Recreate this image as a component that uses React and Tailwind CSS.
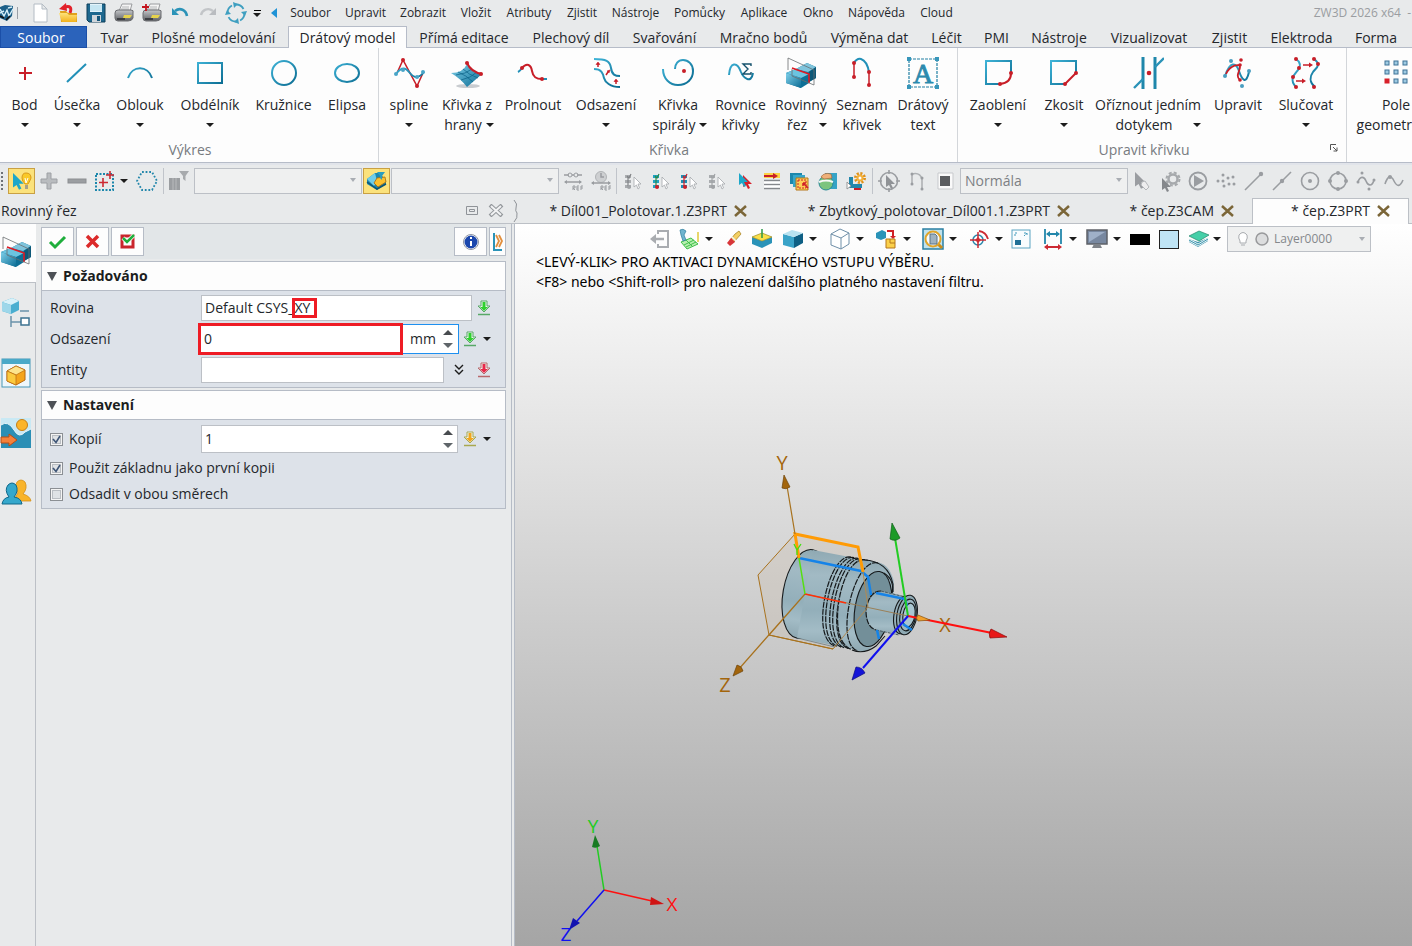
import React, { useState } from "react";

// Shared svg wrapper, s is the side of the square box
function Ico({ s = 24, children }) {
  return (
    <svg
      width={s}
      height={s}
      viewBox={`0 0 ${s} ${s}`}
      fill="none"
      aria-hidden="true"
      className="shrink-0"
    >
      {children}
    </svg>
  );
}

function Caret() {
  return (
    <svg width="8" height="4" viewBox="0 0 8 4" aria-hidden="true" className="shrink-0">
      <path d="M0 0h8L4 4z" fill="#1c1c1c" />
    </svg>
  );
}

function Gradients() {
  return (
    <svg width="0" height="0" className="absolute" aria-hidden="true">
      <defs>
        <linearGradient id="cy" x1="0" y1="0" x2="32" y2="32" gradientUnits="userSpaceOnUse">
          <stop offset="0.1" stopColor="#3fb4d8" />
          <stop offset="0.9" stopColor="#0a6a90" />
        </linearGradient>
        <linearGradient id="cube" x1="0" y1="0" x2="1" y2="1">
          <stop offset="0" stopColor="#7fd0ea" />
          <stop offset="1" stopColor="#0b6c94" />
        </linearGradient>
        <linearGradient id="folder" x1="0" y1="0" x2="0" y2="1">
          <stop offset="0" stopColor="#fde27a" />
          <stop offset="1" stopColor="#f3b21c" />
        </linearGradient>
        <linearGradient id="gray" x1="0" y1="0" x2="0" y2="1">
          <stop offset="0" stopColor="#c4c6c9" />
          <stop offset="1" stopColor="#5d5f63" />
        </linearGradient>
        <linearGradient id="body" x1="0" y1="0" x2="0" y2="1">
          <stop offset="0" stopColor="#8fa9b3" />
          <stop offset="0.25" stopColor="#a2bac4" />
          <stop offset="0.6" stopColor="#93afba" />
          <stop offset="0.8" stopColor="#a3bcc6" />
          <stop offset="1" stopColor="#8da7b1" />
        </linearGradient>
      </defs>
    </svg>
  );
}

const RED = "#c81e28";
const CY = "url(#cy)";

function Dots({ points, r = 2, fill = RED }) {
  return points.map(([x, y]) => <circle key={`${x}-${y}`} cx={x} cy={y} r={r} fill={fill} />);
}

function SectionBox() {
  return (
    <>
      <path d="M11 12L22 6L31 10V21L24 25L11 20Z" fill="#14799f" />
      <path d="M11 12L22 6L31 10L23 15Z" fill="#7fc4dc" />
      <path d="M24 15L31 10V21L24 25Z" fill="#0d5878" />
      <path d="M1 16L11 12L24 17V26L16 31L1 26Z" fill="#0e6f96" />
      <path d="M1 16L11 12L24 17L16 21Z" fill="#6cc4e0" />
      <path d="M1 16L16 21V31L1 26Z" fill="url(#cube)" />
      <path d="M7 11L24 17V26" stroke="#e01822" strokeWidth="1.6" />
      <path d="M3 13V1L29 13V28L7 19V12" stroke="#6a6d70" strokeWidth="0.8" />
    </>
  );
}

// Ribbon icons, 32px
const big = {
  point: <path d="M16 10v13M10 16h13" stroke={RED} strokeWidth="2" />,
  line: <path d="M6 25L25 7" stroke="#2190b8" strokeWidth="2" />,
  arc: <path d="M4 21C8 8 24 8 28 21" stroke={CY} strokeWidth="2" />,
  rect: <rect x="4" y="6" width="24" height="20" stroke={CY} strokeWidth="2" />,
  circle: <circle cx="16" cy="16" r="12" stroke={CY} strokeWidth="2" />,
  ellipse: <ellipse cx="16" cy="16" rx="12" ry="9" stroke={CY} strokeWidth="2" />,
  spline: (
    <>
      <path d="M4 16L10 3L24 29L30 16" stroke={RED} strokeWidth="1.5" />
      <path d="M3 17C9 9 13 11 16 15S24 24 31 15" stroke={CY} strokeWidth="2" />
      <Dots points={[[10, 3], [24, 29]]} />
      <Dots points={[[3, 17], [10, 13], [24, 20], [30, 15]]} fill="#4aa5c8" />
    </>
  ),
  edge: (
    <>
      <ellipse cx="17" cy="29" rx="12" ry="2" fill="#c9ccd0" />
      <path d="M0 16Q12 16 16 7Q20 15 31 17L16 30Q10 22 0 16Z" fill="url(#cube)" />
      <path d="M5 18Q15 17 21 12M10 23Q20 21 26 15M7 15Q15 18 22 25M12 12Q18 18 27 21" stroke="#0a6286" strokeWidth="0.7" />
      <path d="M16 6Q20 15 31 17" stroke={RED} strokeWidth="2" />
      <Dots points={[[16, 6], [30, 17]]} />
    </>
  ),
  blend: (
    <>
      <path d="M1 15Q3 14 5 11M25 22H30" stroke="#2190b8" strokeWidth="2" />
      <path d="M5 11C10 5 14 8 15 14S19 22 25 22" stroke={RED} strokeWidth="2" />
      <Dots points={[[5, 11], [25, 22]]} />
    </>
  ),
  offset: (
    <>
      <path d="M4 2C16 2 20 4 21 11S25 19 30 19" stroke={CY} strokeWidth="2" />
      <path d="M4 12C12 12 13 17 14 21S20 30 30 30" stroke={CY} strokeWidth="2" />
      <path d="M8 10V6M16 18L18 15M26 27V23" stroke={RED} strokeWidth="1.5" />
      <path d="M6 7.5L8 5L10 7.5ZM17 14L20 13L19 16ZM24 24.5L26 22L28 24.5Z" fill={RED} stroke={RED} strokeWidth="0.6" />
    </>
  ),
  spiral: (
    <>
      <path d="M1 12C1 22 8 28 16 28C25 28 31 22 31 14C31 7 26 3 21 3C16 3 13 7 13 12" stroke={CY} strokeWidth="2" />
      <Dots points={[[22, 14]]} />
    </>
  ),
  equation: (
    <>
      <path d="M4 18C5 5 12 4 16 15C18 20 26 28 28 16" stroke={CY} strokeWidth="2" />
      <path d="M26 9V7H18L23 12L18 17H26V15" stroke="#15516c" strokeWidth="1.4" />
    </>
  ),
  section: <SectionBox />,
  list: (
    <>
      <path d="M8 6Q11 1 15 2Q21 4 23 15" stroke="#2190b8" strokeWidth="2" />
      <path d="M8 6V20M23 15V28" stroke={RED} strokeWidth="1.5" />
      <Dots points={[[8, 6], [8, 20], [23, 15], [23, 28]]} />
    </>
  ),
  text: (
    <>
      <rect x="2" y="2" width="28" height="28" stroke="#2280a4" strokeWidth="1.2" strokeDasharray="3 1" />
      <path d="M0 0h4v4H0zM28 0h4v4h-4zM0 28h4v4H0zM28 28h4v4h-4z" fill="#3796ba" />
      <text x="16" y="26" textAnchor="middle" fontFamily="Liberation Serif, serif" fontSize="28" fill="#2b8aae" stroke="#2b8aae" strokeWidth="0.8">A</text>
    </>
  ),
  fillet: (
    <>
      <path d="M29 16V4H4V27H18" stroke={CY} strokeWidth="2" />
      <path d="M29 16Q29 26 18 27" stroke={RED} strokeWidth="2" />
      <Dots points={[[29, 16], [18, 27]]} />
    </>
  ),
  chamfer: (
    <>
      <path d="M28 16V4H3V27H17" stroke={CY} strokeWidth="2" />
      <path d="M28 16L17 27" stroke={RED} strokeWidth="2" />
      <Dots points={[[28, 16], [17, 27]]} />
    </>
  ),
  trim: (
    <>
      <path d="M11 0V32M23 0V32" stroke="#1f87ab" strokeWidth="3" />
      <path d="M32 1L23 10M2 31L11 22" stroke="#2b93b8" strokeWidth="2.4" />
      <Dots points={[[17, 16]]} r={2.3} />
    </>
  ),
  modify: (
    <>
      <path d="M3 19C8 4 14 5 17 14S24 28 27 15" stroke={CY} strokeWidth="2" />
      <path d="M4 17C8 8 18 6 18 10S13 19 18 23" stroke={RED} strokeWidth="1.800" />
      <Dots points={[[19, 3], [18, 8], [18, 23]]} r={1.8} />
      <Dots points={[[9, 4], [3, 19], [27, 14], [20, 29]]} fill="#4a9dc0" />
    </>
  ),
  connect: (
    <>
      <path d="M6 2C12 6 10 10 8 13S-2 22 6 30" stroke={CY} strokeWidth="2" />
      <path d="M24 2C32 8 26 11 23 15S19 25 25 30" stroke={CY} strokeWidth="2" />
      <path d="M13 8H20M6 24H14" stroke={RED} strokeWidth="1.6" />
      <path d="M19 5.5L23 8L19 10.5ZM12 21.5L16 24L12 26.5Z" fill={RED} />
      <Dots points={[[6, 2], [9, 11], [3, 20], [6, 30], [24, 2], [28, 7], [24, 30]]} />
    </>
  ),
  pattern: (
    <>
      {[5, 14, 23].map((y) =>
        [5, 14, 23].map((x) => (
          <rect
            key={`${x}-${y}`}
            x={x}
            y={y - 1}
            width="4"
            height="4"
            fill={x === 5 && y === 23 ? "#d8202a" : "#9fcbe2"}
            stroke={x === 5 && y === 23 ? "#d8202a" : "#3f7397"}
          />
        ))
      )}
    </>
  ),
};

const ribbonGroups = [
  {
    title: "Výkres",
    cls: "pr-[6px]",
    items: [
      { icon: "point", lines: ["Bod"], drop: true, w: "w-[49px]" },
      { icon: "line", lines: ["Úsečka"], drop: true, w: "w-[56px]" },
      { icon: "arc", lines: ["Oblouk"], drop: true, w: "w-[70px]" },
      { icon: "rect", lines: ["Obdélník"], drop: true, w: "w-[70px]" },
      { icon: "circle", lines: ["Kružnice"], w: "w-[77px]" },
      { icon: "ellipse", lines: ["Elipsa"], w: "w-[50px]" },
    ],
  },
  {
    title: "Křivka",
    cls: "pl-[4px] pr-[3px]",
    items: [
      { icon: "spline", lines: ["spline"], drop: true, w: "w-[52px]" },
      { icon: "edge", lines: ["Křivka z", "hrany"], drop: true, w: "w-[64px]", line: "gap-1 pl-1" },
      { icon: "blend", lines: ["Prolnout"], w: "w-[68px]" },
      { icon: "offset", lines: ["Odsazení"], drop: true, w: "w-[78px]" },
      { icon: "spiral", lines: ["Křivka", "spirály"], drop: true, w: "w-[66px]", line: "gap-1 pl-1" },
      { icon: "equation", lines: ["Rovnice", "křivky"], w: "w-[59px]" },
      { icon: "section", lines: ["Rovinný", "řez"], drop: true, w: "w-[62px]", line: "gap-3 pl-3" },
      { icon: "list", lines: ["Seznam", "křivek"], w: "w-[60px]" },
      { icon: "text", lines: ["Drátový", "text"], w: "w-[62px]" },
    ],
  },
  {
    title: "Upravit křivku",
    cls: "pl-[4px] pr-[8px]",
    launcher: true,
    items: [
      { icon: "fillet", lines: ["Zaoblení"], drop: true, w: "w-[72px]" },
      { icon: "chamfer", lines: ["Zkosit"], drop: true, w: "w-[60px]" },
      { icon: "trim", lines: ["Oříznout jedním", "dotykem"], drop: true, w: "w-[108px]", line: "gap-5 pl-5" },
      { icon: "modify", lines: ["Upravit"], w: "w-[72px]" },
      { icon: "connect", lines: ["Slučovat"], drop: true, w: "w-[64px]" },
    ],
  },
  {
    title: "",
    cls: "pl-[3px]",
    items: [{ icon: "pattern", lines: ["Pole", "geometrie"], drop: true, w: "w-[92px]", line: "gap-1" }],
  },
];

function RibbonButton({ item }) {
  const { icon, lines, drop, w, line } = item;
  return (
    <button className={`flex shrink-0 flex-col items-center pt-[9px] leading-5 whitespace-nowrap hover:bg-[#eef4fa] ${w}`}>
      <Ico s={32}>{big[icon]}</Ico>
      <span className="mt-[6px]">{lines[0]}</span>
      {lines[1] ? (
        <span className={`flex items-center ${line || ""}`}>
          {lines[1]}
          {drop && <Caret />}
        </span>
      ) : (
        drop && (
          <span className="flex h-5 items-center">
            <Caret />
          </span>
        )
      )}
    </button>
  );
}

function Ribbon() {
  return (
    <div className="flex h-[115px] shrink-0 overflow-hidden border-b border-[#b6bcc8] bg-[#fdfdfd]">
      {ribbonGroups.map((g) => (
        <section key={g.title} className="flex shrink-0 flex-col border-r border-[#d3d6da]">
          <div className={`flex h-[92px] ${g.cls}`}>
            {g.items.map((item) => (
              <RibbonButton key={item.lines[0]} item={item} />
            ))}
          </div>
          <div className={`relative text-center leading-5 text-[#777b80] ${g.launcher ? "pr-4" : "pl-[2px]"}`}>
            {g.title}
            {g.launcher && (
              <button aria-label="Nastavení skupiny" className="absolute top-0 right-[4px] flex h-4 w-4 items-center justify-center">
                <svg width="8" height="8" viewBox="0 0 8 8" fill="none" stroke="#555">
                  <path d="M0.5 6V0.5H6M3 3L7 7M7 3.5V7H3.5" />
                </svg>
              </button>
            )}
          </div>
        </section>
      ))}
    </div>
  );
}

// Quick access icons
function Printer() {
  return (
    <>
      <path d="M7 10L10 3H20L18 10Z" fill="#f4f4f4" stroke="#9a9c9f" />
      <path d="M10 6H17M9 8H17" stroke="#b4b6b8" />
      <path d="M3 12Q3 9 6 9H19Q22 9 21 12V17Q20 20 16 20H6Q3 20 3 17Z" fill="url(#gray)" stroke="#6a6c70" />
      <path d="M5 18H13" stroke="#3c3e42" strokeWidth="2" />
      <path d="M12 14H20L18 17H11Z" fill="#e6d34c" />
    </>
  );
}

const quick = [
  {
    name: "Nový",
    art: <path d="M6 3H14L19 8V21H6ZM14 3V8H19" fill="#fff" stroke="#b4bcc4" />,
  },
  {
    name: "Otevřít",
    art: (
      <>
        <path d="M4 10H10L12 12H21V21H5Z" fill="#e0a21c" />
        <path d="M3 12H11L13 14H21L20 21H6Z" fill="url(#folder)" />
        <path d="M14 12Q17 4 9 6" stroke="#e2202a" strokeWidth="3" />
        <path d="M10 2L3 8L11 10Z" fill="#e2202a" />
      </>
    ),
  },
  {
    name: "Uložit",
    art: (
      <>
        <path d="M3 3H21V21H5L3 19Z" fill="#1d688f" stroke="#0c3c58" />
        <path d="M6 3H18V11H6Z" fill="#e4f4fb" />
        <path d="M6 5H18M6 7H18M6 9H18" stroke="#a8d8ea" />
        <path d="M8 14H17V21H8Z" fill="#cfd5da" />
        <path d="M13 15H16V20H13Z" fill="#16567a" />
      </>
    ),
  },
  { name: "Tisk", art: <Printer /> },
  {
    name: "Tisk+",
    art: (
      <>
        <Printer />
        <path d="M6 3V10M2 6H9" stroke="#c4141e" strokeWidth="1.8" />
      </>
    ),
  },
  {
    name: "Zpět",
    art: (
      <>
        <path d="M7 10C12 6 18 9 19 15" stroke="#2b93b8" strokeWidth="2.6" />
        <path d="M4 7V14H11Z" fill="#2b93b8" />
      </>
    ),
  },
  {
    name: "Znovu",
    art: (
      <>
        <path d="M17 10C12 6 6 9 5 14" stroke="#c2c5c8" strokeWidth="2.4" />
        <path d="M20 7V14H13Z" fill="#b9bcc0" />
      </>
    ),
  },
  {
    name: "Obnovit",
    art: (
      <>
        <circle cx="12" cy="12" r="8.5" stroke="#3f9fc0" strokeWidth="1.8" strokeDasharray="9 4.3" />
        <path d="M9 1L14 3L10 7ZM23 10L21 15L17 11ZM15 23L10 21L14 17ZM1 14L3 9L7 13Z" fill="#3f9fc0" />
      </>
    ),
  },
];

const menu = [
  ["Soubor", "w-[55px]"],
  ["Upravit", "w-[55px]"],
  ["Zobrazit", "w-[60px]"],
  ["Vložit", "w-[46px]"],
  ["Atributy", "w-[60px]"],
  ["Zjistit", "w-[46px]"],
  ["Nástroje", "w-[61px]"],
  ["Pomůcky", "w-[67px]"],
  ["Aplikace", "w-[62px]"],
  ["Okno", "w-[46px]"],
  ["Nápověda", "w-[71px]"],
  ["Cloud", "w-[49px]"],
];

function TitleBar() {
  return (
    <div className="flex h-[26px] shrink-0 items-center overflow-hidden text-xs">
      <div className="flex w-[26px] items-center gap-[3px]">
        <svg width="14" height="18" viewBox="0 0 14 18" fill="none" aria-hidden="true">
          <path d="M0 3L5 1L13 2L12 12L7 17L0 14Z" fill="#1c5f88" />
          <path d="M0 5L4 12L7 6L9 12L13 5M0 9L4 7M8 4L12 3" stroke="#d5eef8" strokeWidth="1.4" />
          <path d="M0 12L4 14M6 16L10 12" stroke="#111" strokeWidth="1.6" />
        </svg>
        <span className="h-3 w-px bg-[#9a9fa6]" />
      </div>
      {quick.map((q) => (
        <button key={q.name} aria-label={q.name} className="flex w-7 shrink-0 justify-center">
          <Ico>{q.art}</Ico>
        </button>
      ))}
      <button aria-label="Přizpůsobit" className="flex w-[14px] shrink-0 flex-col items-center gap-[2px]">
        <span className="h-px w-[7px] bg-black" />
        <Caret />
      </button>
      <button aria-label="Sbalit nabídku" className="flex w-[19px] shrink-0 justify-center">
        <svg width="6" height="10" viewBox="0 0 6 10">
          <path d="M6 0V10L0 5Z" fill="#1f93d6" />
        </svg>
      </button>
      <nav className="flex shrink-0">
        {menu.map(([label, w]) => (
          <button key={label} className={`whitespace-nowrap ${w}`}>
            {label}
          </button>
        ))}
      </nav>
      <span className="ml-auto pr-px whitespace-pre text-[#9a9da1]">ZW3D 2026 x64  -</span>
    </div>
  );
}

const tabs = [
  ["Tvar", "w-[49px]"],
  ["Plošné modelování", "w-[149px]"],
  ["Drátový model", "w-[119px]"],
  ["Přímá editace", "w-[114px]"],
  ["Plechový díl", "w-[100px]"],
  ["Svařování", "w-[87px]"],
  ["Mračno bodů", "w-[111px]"],
  ["Výměna dat", "w-[101px]"],
  ["Léčit", "w-[53px]"],
  ["PMI", "w-[47px]"],
  ["Nástroje", "w-[78px]"],
  ["Vizualizovat", "w-[102px]"],
  ["Zjistit", "w-[59px]"],
  ["Elektroda", "w-[85px]"],
  ["Forma", "w-[64px]"],
];

function RibbonTabs() {
  const [active, setActive] = useState("Drátový model");
  return (
    <div role="tablist" className="flex h-[22px] shrink-0 overflow-hidden leading-[22px] whitespace-nowrap">
      <button className="w-[87px] shrink-0 border border-[#1b4fa8] bg-[#2b63bb] pr-[5px] leading-[19px] text-white">Soubor</button>
      <span className="w-[3px] shrink-0 border-b border-[#b6bcc8]" />
      {tabs.map(([label, w]) => (
        <button
          key={label}
          role="tab"
          aria-selected={active === label}
          onClick={() => setActive(label)}
          className={`flex shrink-0 justify-center ${w} ${
            active === label ? "border-x border-t border-[#b6bcc8] bg-[#fdfdfd]" : "border-b border-[#b6bcc8] pt-px"
          }`}
        >
          {label}
        </button>
      ))}
      <span className="flex-1 border-b border-[#b6bcc8]" />
    </div>
  );
}

// Selection toolbar
const G = "#9a9da1";

function Cursor({ fill = "#1ca7c9", x = 0, y = 0, k = 1 }) {
  return <path transform={`translate(${x} ${y}) scale(${k})`} d="M0 0L0 12L3 10L5 14L7 13L5 9L9 9Z" fill={fill} />;
}

function PickList({ bar, dot, tip }) {
  return (
    <>
      <path d="M5 6H11V9H5ZM5 11H11V14H5ZM5 16H11V19H5Z" fill={bar} />
      <path d="M8 8V17" stroke={tip} strokeWidth="1.2" />
      <path d="M7 7L9 9L11 5" stroke={tip} strokeWidth="1.2" />
      <circle cx="9" cy="18" r="2" fill={dot} />
      <path d="M14 8V18L16.5 16L18 20L19.5 19L18 15H21Z" fill="#fff" stroke="#a5a8ac" strokeWidth="0.8" />
    </>
  );
}

const selA = {
  plus: <path d="M10 4H14V10H20V14H14V20H10V14H4V10H10Z" fill="#b9bcbf" stroke="#9da0a4" />,
  minus: <rect x="3" y="10" width="18" height="4" fill="#9b9ea1" stroke="#8b8e92" />,
};

const selB = [
  {
    name: "Řetěz",
    art: (
      <>
        <path d="M3 6H8M11 6H13M16 6H21M4 13H20" stroke={G} strokeWidth="1.5" />
        <circle cx="9" cy="6" r="2" stroke={G} />
        <circle cx="15" cy="6" r="2" stroke={G} />
        <path d="M3 13L6 11V15ZM21 13L18 11V15Z" fill={G} />
        <path d="M12 17V21M12 17H14V19H12L14 21M18 17H16V21H18M16 19H18M20 21V17H22M20 19H22" stroke={G} />
      </>
    ),
  },
  {
    name: "Historie",
    art: (
      <>
        <circle cx="12" cy="8" r="5.5" fill="#cdcfd1" stroke="#b0b3b6" />
        <path d="M12 4V8H15M3 14H21" stroke={G} strokeWidth="1.5" />
        <path d="M2 14L5 12V16ZM22 14L19 12V16Z" fill={G} />
        <path d="M12 17V21M12 17H14V19H12L14 21M18 17H16V21H18M16 19H18M20 21V17H22M20 19H22" stroke={G} />
      </>
    ),
  },
];

const selC = [
  { name: "Seznam 1", art: <PickList bar="#a9acaf" dot="#a0a3a6" tip="#808386" /> },
  { name: "Seznam 2", art: <PickList bar="#1fa3c4" dot="#cf1f2a" tip="#2a8a4a" /> },
  { name: "Seznam 3", art: <PickList bar="#1f8fb4" dot="#cf1f2a" tip="#cf1f2a" /> },
  { name: "Seznam 4", art: <PickList bar="#a9acaf" dot="#a0a3a6" tip="#a0a3a6" /> },
  {
    name: "Výběr",
    art: (
      <>
        <Cursor x={11} y={6} fill="#d8202a" />
        <Cursor x={7} y={4} />
      </>
    ),
  },
  {
    name: "Pořadí",
    art: (
      <>
        <path d="M4 4H20V9H4Z" fill="#fbd345" />
        <path d="M4 7H14" stroke="#c81e28" strokeWidth="2" />
        <path d="M13 4L18 7L13 10Z" fill="#c81e28" />
        <path d="M4 11.5H20M4 15.5H20M4 19.5H20" stroke="#85888c" strokeWidth="1.4" />
        <path d="M4 13.500H20M4 17.500H20" stroke="#fff" strokeWidth="2" />
      </>
    ),
  },
  {
    name: "Oblast",
    art: (
      <>
        <path d="M2 4H14V15H2Z" fill="#1c87ac" />
        <path d="M5 6H17V18H5Z" fill="#35a7ca" />
        <path d="M8 9H20V21H8Z" fill="#fdcf57" stroke="#b5761d" />
        <path d="M10 11H18V19H10Z" stroke="#d02028" strokeDasharray="2 1" />
        <path d="M15 14L20 19M15 14V17M15 14H18" stroke="#d02028" strokeWidth="1.5" />
      </>
    ),
  },
  {
    name: "Koule",
    art: (
      <>
        <path d="M9 4H21V20H9Z" fill="#35a3c6" />
        <circle cx="10" cy="14" r="7" fill="#7cc47e" stroke="#2a8a96" />
        <path d="M3 13Q10 10 17 13" stroke="#f8f8f8" strokeWidth="2" />
        <path d="M5 8Q8 3 15 5L16 9L8 10Z" fill="#efb079" stroke="#a9683a" strokeWidth="0.7" />
      </>
    ),
  },
  {
    name: "Nastavení",
    art: (
      <>
        <path d="M7 8V17H18" stroke="#2387ab" strokeWidth="4" />
        <path d="M10 20H17" stroke="#c81e28" strokeWidth="2" />
        <circle cx="16" cy="9" r="4.500" stroke="#e0921a" strokeWidth="3" strokeDasharray="2 1.500" />
        <circle cx="16" cy="9" r="2.500" fill="#fff" stroke="#f3b03a" strokeWidth="2" />
        <path d="M3 13V20L7 17Z" fill="#fff" stroke="#999" />
      </>
    ),
  },
];

const selD = [
  {
    name: "Cíl",
    art: (
      <>
        <circle cx="12" cy="12" r="8.5" stroke={G} strokeWidth="1.6" />
        <path d="M12 1V5M12 19V23M1 12H5M19 12H23" stroke={G} strokeWidth="1.6" />
        <Cursor x={9} y={6} fill="#8f9296" />
      </>
    ),
  },
  {
    name: "Křivky",
    art: (
      <>
        <path d="M7 5V16M7 5Q15 3 17 10V20" stroke="#aeb1b4" strokeWidth="1.6" />
        <Dots points={[[7, 5], [7, 15], [17, 9], [17, 20]]} r={1.5} fill={G} />
      </>
    ),
  },
  {
    name: "Blok",
    art: (
      <>
        <path d="M5 4H20V20H5Z" fill="#fafafa" stroke="#c7c9cc" />
        <path d="M7 7H17V17H7Z" fill="#5b5d60" />
      </>
    ),
  },
];

const selE = [
  {
    name: "Kurzor",
    art: (
      <>
        <Cursor x={5} y={3} fill="#9a9da1" k={1.2} />
        <path d="M12 13L15 12L19 18L16 21L11 16Z" fill="#eeeeef" stroke="#b4b7ba" />
      </>
    ),
  },
  {
    name: "Ozubené kolo",
    art: (
      <>
        <circle cx="15" cy="10" r="4.500" stroke="#a6a9ac" strokeWidth="2.500" />
        <circle cx="15" cy="10" r="6.500" stroke="#a6a9ac" strokeWidth="2" strokeDasharray="3 2.100" />
        <Cursor x={4} y={9} fill="#85888c" />
      </>
    ),
  },
  {
    name: "Přehrát",
    art: (
      <>
        <circle cx="12" cy="12" r="8.5" stroke={G} strokeWidth="1.8" />
        <path d="M8 6V18L18 12Z" fill={G} />
      </>
    ),
  },
  {
    name: "Body",
    art: (
      <Dots points={[[4, 12], [9, 6], [9, 12], [14, 9], [10, 17], [15, 15], [19, 8], [20, 15]]} r={1.5} fill={G} />
    ),
  },
  {
    name: "Koncový bod",
    art: (
      <>
        <path d="M3 21L20 4" stroke={G} strokeWidth="1.6" />
        <circle cx="19" cy="5" r="2.2" fill={G} />
      </>
    ),
  },
  {
    name: "Střed úsečky",
    art: (
      <>
        <path d="M3 21L21 3" stroke={G} strokeWidth="1.6" />
        <circle cx="12" cy="12" r="2.2" fill={G} />
      </>
    ),
  },
  {
    name: "Střed",
    art: (
      <>
        <circle cx="12" cy="12" r="8.5" stroke={G} strokeWidth="1.6" />
        <circle cx="12" cy="12" r="2" fill={G} />
      </>
    ),
  },
  {
    name: "Kvadrant",
    art: (
      <>
        <circle cx="12" cy="12" r="8" stroke={G} strokeWidth="1.6" />
        <Dots points={[[12, 4], [20, 12], [12, 20], [4, 12]]} r={2} fill={G} />
      </>
    ),
  },
  {
    name: "Řídicí body",
    art: (
      <>
        <path d="M4 13C6 7 10 7 12 12S18 18 20 11" stroke={G} strokeWidth="1.6" />
        <Dots points={[[8, 4], [4, 13], [15, 20], [20, 11]]} r={1.5} fill={G} />
      </>
    ),
  },
  {
    name: "Bod na křivce",
    art: (
      <>
        <path d="M3 15C6 6 9 6 12 12S18 18 21 11" stroke={G} strokeWidth="1.6" />
        <circle cx="8" cy="8" r="2" fill={G} />
      </>
    ),
  },
];

function ToolIcons({ list }) {
  return list.map((t) => (
    <button key={t.name} aria-label={t.name} className="flex w-7 shrink-0 justify-center">
      <Ico>{t.art}</Ico>
    </button>
  ));
}

function GrayCombo({ label, value, className }) {
  return (
    <label className={`relative block w-[168px] shrink-0 ${className || ""}`}>
      <select aria-label={label} className="block h-[26px] w-full appearance-none border border-[#bcc0c6] bg-[#eff0f0] pl-1 text-[#7d8084]">
        {value && <option>{value}</option>}
      </select>
      <svg width="6" height="4" viewBox="0 0 6 4" className="pointer-events-none absolute top-[10px] right-[6px]">
        <path d="M0 0h6L3 4z" fill="#a9adb3" />
      </svg>
    </label>
  );
}

function SelectToolbar() {
  return (
    <div className="flex h-[35px] shrink-0 items-center overflow-hidden border-t-2 border-[#e1e4ea] pb-[2px]">
      <span className="mr-[5px] h-[18px] w-[3px] shrink-0 border-r-2 border-dotted border-[#6d7176]" />
      <button aria-label="Nápověda výběru" className="flex h-[26px] w-[27px] shrink-0 items-center justify-center border border-[#c9a043] bg-[#fbe27c]">
        <Ico>
          <path d="M12 9Q12 4 16 4Q21 4 21 9Q20 12 18 15H15Q12 12 12 9Z" fill="#f9c928" stroke="#d99a1a" />
          <path d="M15 17H18M15 19H18" stroke="#8a8a8a" strokeWidth="1.5" />
          <path d="M15 9L16 14L18 9" stroke="#fff" />
          <Cursor x={3} y={4} k={1.2} />
        </Ico>
      </button>
      <button aria-label="Přidat" className="flex w-7 shrink-0 justify-center">
        <Ico>{selA.plus}</Ico>
      </button>
      <button aria-label="Odebrat" className="flex w-7 shrink-0 justify-center">
        <Ico>{selA.minus}</Ico>
      </button>
      <button aria-label="Výběr oknem" className="flex w-[42px] shrink-0 items-center gap-[3px] pl-[2px]">
        <Ico>
          <rect x="3" y="5" width="17" height="16" stroke="#1c87ac" strokeWidth="2" strokeDasharray="2 1.500" />
          <path d="M10 9V18M6 13.5H15M17 2V10M13 6H21" stroke="#cc2a33" strokeWidth="1.6" />
        </Ico>
        <Caret />
      </button>
      <button aria-label="Výběr polygonem" className="mr-[2px] flex w-7 shrink-0 justify-center">
        <Ico>
          <path d="M7 3H17L22 12L17 21H7L2 12Z" stroke="#2387ab" strokeWidth="1.8" strokeDasharray="1.800 1.800" />
        </Ico>
      </button>
      <span className="h-[26px] w-px shrink-0 bg-[#c0c4ca]" />
      <button aria-label="Filtr" className="flex w-[30px] shrink-0 justify-center">
        <Ico>
          <path d="M2 9H13V21H2Z" fill="#9b9ea1" />
          <path d="M6 9V21M9 9V21" stroke="#b9bbbd" />
          <path d="M12 2H22L18.5 7V12L16 10V7Z" fill="#a7aaad" />
        </Ico>
      </button>
      <GrayCombo label="Filtr výběru" />
      <button aria-label="Filtr sestavy" className="mx-px flex h-[26px] w-[27px] shrink-0 items-center justify-center border border-[#c9a043] bg-[#fbe27c]">
        <Ico>
          <path d="M2 10L10 4H15L21 12V15L12 21L2 15Z" fill="#1a87ad" />
          <path d="M2 10L10 4L12 12L9 17Z" fill="#6fcde8" />
          <path d="M2 13L12 20L21 15" stroke="#0d5474" strokeWidth="1.5" />
          <path d="M12 9L20 8L21 13L13 18L9 14Z" fill="#fbc02d" stroke="#a36b12" strokeWidth="0.8" />
          <path d="M12 3H20L17 7V11L15 9V7Z" fill="#2a9cc0" />
        </Ico>
      </button>
      <GrayCombo label="Rozsah výběru" />
      <ToolIcons list={selB} />
      <span className="mx-px h-[26px] w-px shrink-0 bg-[#c0c4ca]" />
      <ToolIcons list={selC} />
      <span className="mx-[2px] h-[26px] w-px shrink-0 bg-[#c0c4ca]" />
      <ToolIcons list={selD} />
      <GrayCombo label="Směr" value="Normála" className="ml-px" />
      <ToolIcons list={selE} />
    </div>
  );
}

// Open documents
const docs = [
  { name: "* Díl001_Polotovar.1.Z3PRT", w: "w-[244px]" },
  { name: "* Zbytkový_polotovar_Díl001.1.Z3PRT", w: "w-[323px]" },
  { name: "* čep.Z3CAM", w: "w-[164px]" },
  { name: "* čep.Z3PRT", w: "w-[157px]", active: true },
];

function CloseX() {
  return (
    <svg width="13" height="12" viewBox="0 0 13 12" fill="none" stroke="#7b6638" strokeWidth="2.5">
      <path d="M1 1L12 11M12 1L1 11" />
    </svg>
  );
}

function DocTabs() {
  return (
    <div className="flex min-w-0 flex-1 overflow-hidden">
      {docs.map((d) => (
        <div
          key={d.name}
          className={`flex shrink-0 items-center justify-end gap-[7px] pr-[18px] whitespace-nowrap ${d.w} ${
            d.active ? "border-x border-t border-[#bcc0c6] bg-[#fdfdfd] pb-[2px]" : "border-b border-[#bcc0c6]"
          }`}
        >
          <button>{d.name}</button>
          <button aria-label="Zavřít">
            <CloseX />
          </button>
        </div>
      ))}
      <span className="flex-1 border-b border-[#bcc0c6]" />
    </div>
  );
}

// Side strip with manager tabs
const managers = [
  {
    name: "Strom historie",
    art: (
      <>
        <path d="M2 5L12 1L19 4V13L11 17L2 14Z" fill="#4aaed0" />
        <path d="M2 5L12 1L19 4L11 8Z" fill="#d8f1f9" />
        <path d="M2 5L11 8V17L2 14Z" fill="#9dd7ea" />
        <path d="M20 14H29M11 19V30M11 25H21" stroke="#6a93ab" strokeWidth="1.5" />
        <rect x="21" y="21" width="8" height="7" fill="#fff" stroke="#3d7391" strokeWidth="1.5" />
      </>
    ),
  },
  {
    name: "Sestava",
    art: (
      <>
        <rect x="2" y="2" width="28" height="28" fill="#eef7fb" stroke="#4697b8" />
        <path d="M2 2H30V7H2Z" fill="#4aa9c8" />
        <path d="M7 14L16 9L25 13V23L16 28L7 24Z" fill="#f4a51c" stroke="#b8690e" />
        <path d="M7 14L16 9L25 13L16 18Z" fill="#fde48c" stroke="#b8690e" strokeWidth="0.7" />
        <path d="M7 14L16 18V28L7 24Z" fill="#fbca3e" stroke="#b8690e" strokeWidth="0.7" />
      </>
    ),
  },
  {
    name: "Vzhledy",
    art: (
      <>
        <rect x="1" y="1" width="30" height="30" fill="#c9e9f4" />
        <path d="M1 8Q8 3 14 13Q19 22 25 15L31 12V31H1Z" fill="#2b8fb5" />
        <path d="M1 8Q8 3 14 13Q19 22 25 15L31 12" stroke="#e8f6fb" />
        <circle cx="22" cy="8" r="5.500" fill="#fbb52a" stroke="#c77f16" />
        <path d="M1 20H9V17L17 23L9 29V26H1Z" fill="#f5823a" stroke="#b84c12" />
      </>
    ),
  },
  {
    name: "Role",
    art: (
      <>
        <path d="M14 24Q16 18 18 16Q14 10 17 5Q21 1 25 5Q28 11 23 17Q30 19 31 24Z" fill="#f9b42b" stroke="#d48f15" strokeWidth="0.8" />
        <path d="M2 27Q3 21 9 20Q4 13 8 8Q12 4 16 8Q19 14 14 20Q21 21 22 27Z" fill="#35a8cc" stroke="#10688a" />
      </>
    ),
  },
];

function SideStrip() {
  return (
    <aside className="flex w-9 shrink-0 flex-col">
      <button aria-label="Rovinný řez" className="flex h-[58px] items-center bg-[#fdfdfd] pb-[2px]">
        <Ico s={32}>
          <SectionBox />
        </Ico>
      </button>
      <div className="flex flex-1 flex-col gap-7 border-t border-r border-[#bcc0c6] pt-[14px]">
        {managers.map((m) => (
          <button key={m.name} aria-label={m.name} className="flex h-8 items-center">
            <Ico s={32}>{m.art}</Ico>
          </button>
        ))}
      </div>
    </aside>
  );
}

function DownArrow({ color, base }) {
  return (
    <svg width="14" height="16" viewBox="0 0 14 16" fill="none" aria-hidden="true" className="shrink-0">
      <path d="M4 1H10V6H13L7 12L1 6H4Z" fill="#eef6ee" stroke={base} />
      <path d="M5.500 2H8.500V7H11L7 11L3 7H5.500Z" fill={color} />
      <path d="M1 14.5H13" stroke={base} strokeWidth="1.5" />
    </svg>
  );
}

function Spinner() {
  return (
    <span className="flex shrink-0 flex-col gap-2">
      <button aria-label="Zvýšit" className="flex">
        <svg width="10" height="5" viewBox="0 0 10 5">
          <path d="M0 5L5 0L10 5Z" fill="#484b4f" />
        </svg>
      </button>
      <button aria-label="Snížit" className="flex">
        <svg width="10" height="5" viewBox="0 0 10 5">
          <path d="M0 0L5 5L10 0Z" fill="#5f6569" />
        </svg>
      </button>
    </span>
  );
}

function Section({ title, children }) {
  return (
    <section className="border border-[#b6bcc6] bg-[#dde2e9]">
      <h2 className="flex h-[29px] items-center gap-[6px] border-b border-[#b6bcc6] bg-[#fdfdfd] pl-[5px] font-bold text-[#1b1d20]">
        <svg width="10" height="9" viewBox="0 0 10 9">
          <path d="M0 0H10L5 9Z" fill="#4d5156" />
        </svg>
        {title}
      </h2>
      {children}
    </section>
  );
}

function Check({ label, on }) {
  const [checked, setChecked] = useState(on);
  return (
    <label className="flex items-center gap-[6px]">
      <input type="checkbox" checked={checked} onChange={() => setChecked(!checked)} className="sr-only" />
      <svg width="13" height="13" viewBox="0 0 13 13" fill="none" aria-hidden="true">
        <rect x="0.5" y="0.5" width="12" height="12" fill="#f4f4f4" stroke="#8b8f94" />
        <rect x="2.5" y="2.5" width="8" height="8" fill="#dfe2e5" stroke="#b9bdc2" />
        {checked && <path d="M3 6L6 9.5L10 3" stroke="#3d5475" strokeWidth="1.6" />}
      </svg>
      {label}
    </label>
  );
}

const actions = [
  { name: "OK", art: <path d="M4 12L9 17L19 7" stroke="#1fae3c" strokeWidth="3" /> },
  { name: "Zrušit", art: <path d="M6 6L17 17M17 6L6 17" stroke="#dc2a2a" strokeWidth="3.500" /> },
  {
    name: "Použít",
    art: (
      <>
        <path d="M6 6H17V17H6Z" stroke="#c9252c" strokeWidth="3" />
        <path d="M7 8L11 12L18 5" stroke="#fff" strokeWidth="4" />
        <path d="M7 8L11 12L18 5" stroke="#1fae3c" strokeWidth="2.5" />
      </>
    ),
  },
];

function CommandPanel() {
  const [offset, setOffset] = useState("0");
  const [copies, setCopies] = useState("1");
  return (
    <div className="flex min-w-0 flex-1 flex-col bg-[#e8eaeb] pr-[5px] pl-[5px]">
      <div className="flex gap-[2px] bg-[#e2e6e8] py-[3px]">
        {actions.map((a) => (
          <button key={a.name} aria-label={a.name} className="flex h-[29px] w-[33px] items-center justify-center border border-[#b6bcc6] bg-[#fdfdfd]">
            <Ico>{a.art}</Ico>
          </button>
        ))}
        <button aria-label="Informace" className="ml-auto flex h-[29px] w-[33px] items-center justify-center border border-[#b6bcc6] bg-[#fdfdfd]">
          <Ico>
            <circle cx="12" cy="12" r="7.500" fill="#fff" stroke="#8d93a0" />
            <circle cx="12" cy="12" r="6.500" fill="#1b47ad" />
            <path d="M12 11V16M12 7V9" stroke="#fff" strokeWidth="2" />
          </Ico>
        </button>
        <button aria-label="Rozbalit" className="flex h-[29px] w-[17px] items-center justify-center border border-[#b6bcc6] bg-[#fdfdfd]">
          <svg width="12" height="20" viewBox="0 0 12 20" fill="none">
            <path d="M2 1V18H10" stroke="#2a93b8" strokeWidth="2" />
            <path d="M4 3L7 9L4 15M7 3L10 9L7 15" stroke="#e28f3d" strokeWidth="1.8" />
          </svg>
        </button>
      </div>

      <div className="mt-[2px] flex flex-col gap-[2px]">
        <Section title="Požadováno">
          <div className="flex flex-col pt-px pb-[2px] pl-2">
            <div className="flex h-[31px] items-center">
              <label htmlFor="plane" className="w-[151px] shrink-0">
                Rovina
              </label>
              <div className="relative w-[271px]">
                <input id="plane" defaultValue="Default CSYS_XY" className="block h-[26px] w-full border border-[#bcc0c6] bg-white px-[3px] outline-none" />
                {/* highlight around the plane name */}
                <span className="pointer-events-none absolute top-[3px] left-[91px] h-[20px] w-[25px] border-[3px] border-[#ee1c25]" />
              </div>
              <button aria-label="Vybrat rovinu" className="ml-[5px]">
                <DownArrow color="#2fd02f" base="#58a868" />
              </button>
            </div>
            <div className="flex h-[31px] items-center">
              <label htmlFor="offset" className="w-[151px] shrink-0">
                Odsazení
              </label>
              <div className="relative flex h-[30px] w-[258px] items-center justify-end gap-[7px] border border-[#1e90f0] bg-white pr-[5px]">
                <input
                  id="offset"
                  value={offset}
                  onChange={(e) => setOffset(e.target.value)}
                  className="absolute -top-[2px] -left-[4px] h-8 w-[205px] border-[3px] border-[#ee1c25] bg-white px-[3px] outline-none"
                />
                <span>mm</span>
                <Spinner />
              </div>
              <button aria-label="Možnosti odsazení" className="ml-[4px] flex items-center gap-[6px]">
                <DownArrow color="#2fd02f" base="#58a868" />
                <Caret />
              </button>
            </div>
            <div className="flex h-[31px] items-center">
              <label htmlFor="entity" className="w-[151px] shrink-0">
                Entity
              </label>
              <input id="entity" className="h-[26px] w-[243px] border border-[#bcc0c6] bg-white px-[3px] outline-none" />
              <button aria-label="Rozbalit seznam" className="ml-[10px]">
                <svg width="10" height="12" viewBox="0 0 10 12" fill="none" stroke="#1c1c1c" strokeWidth="1.4">
                  <path d="M1 1L5 5L9 1M1 6L5 10L9 6" />
                </svg>
              </button>
              <button aria-label="Vybrat entity" className="ml-[13px]">
                <DownArrow color="#e8284a" base="#b8686c" />
              </button>
            </div>
          </div>
        </Section>

        <Section title="Nastavení">
          <div className="flex flex-col pt-[3px] pb-px pl-2">
            <div className="flex h-8 items-center">
              <div className="w-[151px] shrink-0">
                <Check label="Kopií" on={true} />
              </div>
              <div className="flex h-7 w-[257px] items-center border border-[#bcc0c6] bg-white pr-[4px]">
                <input
                  aria-label="Kopií"
                  value={copies}
                  onChange={(e) => setCopies(e.target.value)}
                  className="min-w-0 flex-1 px-[3px] outline-none"
                />
                <Spinner />
              </div>
              <button aria-label="Možnosti kopií" className="ml-[5px] flex items-center gap-[6px]">
                <DownArrow color="#f0a51c" base="#a8a850" />
                <Caret />
              </button>
            </div>
            <div className="flex h-[26px] items-center">
              <Check label="Použit základnu jako první kopii" on={true} />
            </div>
            <div className="flex h-[26px] items-center">
              <Check label="Odsadit v obou směrech" on={false} />
            </div>
          </div>
        </Section>
      </div>
    </div>
  );
}

// Graphics area
const viewTools = [
  {
    name: "Ukončit",
    w: "w-[29px]",
    art: (
      <>
        <path d="M10 7V4H20V20H10V17" stroke="#a9acb0" strokeWidth="2" />
        <path d="M16 12H6" stroke="#a9acb0" strokeWidth="2.5" />
        <path d="M8 7V17L2 12Z" fill="#a9acb0" />
      </>
    ),
  },
  {
    name: "Náčrt",
    w: "w-[45px]",
    drop: true,
    art: (
      <>
        <path d="M4 15L14 11L21 17L10 22Z" fill="#b7efae" stroke="#3fbf4c" />
        <path d="M7 18L17 13M9 20L19 15M9 13L15 19" stroke="#3fbf4c" />
        <path d="M3 3Q6 1 9 4L7 8L9 13L6 14L4 8Z" fill="#6fb4cf" stroke="#2c7c9c" strokeWidth="0.7" />
        <path d="M21 5V15" stroke="#e0c83a" strokeWidth="1.5" />
      </>
    ),
  },
  {
    name: "Guma",
    w: "w-[28px]",
    art: (
      <>
        <path d="M13 7L17 4L19 7L12 15L9 12Z" fill="#f4d064" stroke="#a07b1a" strokeWidth="0.7" />
        <path d="M9 11L13 15L8 19L5 16Z" fill="#d8363a" />
        <path d="M10 10L14 14" stroke="#f2f2f2" strokeWidth="1.5" />
      </>
    ),
  },
  {
    name: "Rovina pohledu",
    w: "w-[31px]",
    art: (
      <>
        <path d="M2 10L12 14V21L2 17ZM12 14L22 10V16L12 21Z" fill="#2a93b8" />
        <path d="M2 10L12 6L22 10L12 14Z" fill="#fbe04a" stroke="#9a8a20" strokeWidth="0.7" />
        <path d="M12 2V11" stroke="#2a9a48" strokeWidth="1.5" />
      </>
    ),
  },
  {
    name: "Stínovaný",
    w: "w-[47px]",
    drop: true,
    art: (
      <>
        <path d="M2 7L13 10V21L2 18Z" fill="#3aa3c8" />
        <path d="M13 10L22 6V16L13 21Z" fill="#0e5f84" />
        <path d="M2 7L11 3L22 6L13 10Z" fill="#b9e2f0" />
      </>
    ),
  },
  {
    name: "Drátový",
    w: "w-[47px]",
    drop: true,
    art: <path d="M3 7L12 2L21 6V17L13 22L3 18ZM3 7L13 11L21 6M13 11V22" fill="#fff" stroke="#6f8fa8" />,
  },
  {
    name: "Orientace",
    w: "w-[46px]",
    drop: true,
    art: (
      <>
        <path d="M1 6L7 3L11 5V11L6 13L1 11Z" fill="#2a93b8" />
        <path d="M12 4H18V10" stroke="#d02028" strokeWidth="2" />
        <path d="M15 9H21L18 12Z" fill="#d02028" />
        <path d="M11 12H20V21H11Z" fill="#fbd04a" stroke="#b5761d" />
        <path d="M15 12V16H20" stroke="#b5761d" />
      </>
    ),
  },
  {
    name: "Přiblížit vše",
    w: "w-[46px]",
    drop: true,
    art: (
      <>
        <rect x="2" y="2" width="20" height="20" fill="#bfe2ee" stroke="#2a7fa2" strokeWidth="1.5" />
        <path d="M17 17L21 21" stroke="#c98d1c" strokeWidth="3" />
        <circle cx="12" cy="12" r="7.5" fill="#f7fbfd" stroke="#e0a52a" strokeWidth="2" />
        <path d="M9 7H14L16 9V17H9Z" fill="#9fb2bf" stroke="#5a7486" />
      </>
    ),
  },
  {
    name: "Střed rotace",
    w: "w-[42px]",
    drop: true,
    art: (
      <>
        <circle cx="11" cy="13" r="5" stroke="#2a87ab" strokeWidth="1.5" />
        <path d="M11 5V21M3 13H19" stroke="#cc2a33" strokeWidth="1.5" />
        <path d="M12 4Q19 5 21 12" stroke="#cc2a33" strokeWidth="1.8" />
        <path d="M8 13L11 10L14 13L11 16Z" fill="#cc2a33" />
      </>
    ),
  },
  {
    name: "Okno pohledu",
    w: "w-[32px]",
    art: (
      <>
        <rect x="3" y="3" width="18" height="18" fill="#f8fcfe" stroke="#5aa4c2" />
        <path d="M6 13H12V18H6Z" fill="#1f6f96" />
        <path d="M15 6H18V9M15 9L18 6M6 9V6H9" stroke="#3d98ba" strokeDasharray="2 1" />
      </>
    ),
  },
  {
    name: "Měření",
    w: "w-[44px]",
    drop: true,
    art: (
      <>
        <path d="M4 2V17M20 2V17M6 7H18" stroke="#2387ab" strokeWidth="1.8" />
        <path d="M5 7L9 4V10ZM19 7L15 4V10Z" fill="#2387ab" />
        <path d="M5 20H19" stroke="#cc2a33" strokeWidth="2" />
        <path d="M3 20L7 17V23ZM21 20L17 17V23Z" fill="#cc2a33" />
      </>
    ),
  },
  {
    name: "Obrazovka",
    w: "w-[43px]",
    drop: true,
    art: (
      <>
        <rect x="2" y="3" width="20" height="14" fill="#7888a0" stroke="#5d6067" strokeWidth="1.5" />
        <path d="M4 5H20L4 15Z" fill="#9fb0c8" />
        <path d="M9 17H15L17 21H7Z" fill="#7e8288" />
      </>
    ),
  },
];

function ViewToolbar() {
  return (
    <div className="flex h-[30px] items-center overflow-hidden pl-[133px]">
      {viewTools.map((t) => (
        <button key={t.name} aria-label={t.name} className={`flex shrink-0 items-center gap-1 ${t.w}`}>
          <Ico>{t.art}</Ico>
          {t.drop && <Caret />}
        </button>
      ))}
      <button aria-label="Barva čáry" className="mr-[9px] ml-[2px] h-[11px] w-5 shrink-0 bg-black" />
      <button aria-label="Barva plochy" className="mr-[8px] h-[19px] w-5 shrink-0 border border-[#222] bg-[#bfe4f5]" />
      <button aria-label="Vrstvy" className="flex w-10 shrink-0 items-center gap-[2px]">
        <Ico>
          <path d="M2 15L11 20L21 14V11L11 15L2 12Z" fill="#3d93ac" />
          <path d="M2 12L11 17L21 11M2 14L11 19L21 13" stroke="#e4f3f6" />
          <path d="M2 9L12 14L22 8L12 4Z" fill="#45cfa8" stroke="#23866c" strokeWidth="0.7" />
        </Ico>
        <Caret />
      </button>
      <label className="relative flex h-[26px] w-[144px] shrink-0 items-center gap-[5px] border border-[#bcc0c6] bg-[#eff0f0] pl-[8px] text-xs text-[#85888c]">
        <svg width="14" height="16" viewBox="0 0 14 16" fill="none" stroke="#a9acb0">
          <path d="M4 10Q2 7 3 4Q7 -1 11 4Q12 7 10 10V12H4ZM5 14H9" fill="#fff" />
        </svg>
        <svg width="14" height="16" viewBox="0 0 14 16">
          <circle cx="7" cy="8" r="6" fill="#dcddde" stroke="#98999b" strokeWidth="1.5" />
        </svg>
        <select aria-label="Vrstva" className="flex-1 appearance-none bg-transparent">
          <option>Layer0000</option>
        </select>
        <svg width="6" height="4" viewBox="0 0 6 4" className="pointer-events-none absolute top-[10px] right-[5px]">
          <path d="M0 0h6L3 4z" fill="#a9adb3" />
        </svg>
      </label>
    </div>
  );
}

function Ring({ cx, cy, rx, ry, ...rest }) {
  return <ellipse cx={cx} cy={cy} rx={rx} ry={ry} transform={`rotate(10 ${cx} ${cy})`} {...rest} />;
}

// x positions of the groove edges on the large cylinder
const grooves = [843, 846, 850, 853, 857, 860];

function Model() {
  const edge = { stroke: "#15191b", strokeWidth: 1.1 };
  const dash = { stroke: "#15191b", strokeWidth: 1.2, fill: "none", strokeDasharray: "6 1" };
  const axisText = { fontFamily: "Open Sans, sans-serif", fontSize: 20, textAnchor: "middle" };
  return (
    <svg width="320" height="260" viewBox="700 440 320 260" fill="none" className="absolute top-[216px] left-[185px]">
      {/* datum planes */}
      <path d="M795 534L758 575L769 635L833 649L870 607L858 547Z" fill="#c9b8a4" fillOpacity="0.25" stroke="#a8721e" />

      {/* large cylinder */}
      <Ring cx={805} cy={594} rx={22} ry={45} fill="url(#body)" {...edge} />
      <path d="M813 550L876 562L862 651L797 638Z" fill="url(#body)" />
      <path d="M797 638L835 647" stroke="#5d7179" strokeWidth="0.7" />
      {grooves.map((x) => {
        const y = 602 + (x - 843) * 0.2;
        return (
          <path
            key={x}
            d={`M${x + 8} ${y - 45}C${x - 14} ${y - 50} ${x - 34} ${y + 36} ${x - 8} ${y + 44}`}
            {...dash}
          />
        );
      })}
      <path d="M864 560C838 558 826 640 852 649L862 652C884 650 898 592 893 578Q888 563 876 562Z" fill="url(#body)" />
      <path d="M864 560C840 558 826 640 850 649M878 563C853 557 834 645 858 651" {...dash} />
      <path d="M852 650Q864 655 876 646L885 636M864 560Q888 561 893 584V592" {...edge} />
      <Ring cx={873} cy={609} rx={18} ry={38} fill="#738f99" {...edge} />
      <path d="M884 573Q895 580 892 594" {...edge} />

      {/* pin */}
      <path d="M881 591L910 597L904 635L876 630Q866 627 866 612Q869 593 881 591Z" fill="url(#body)" />
      <path d="M881 591Q869 591 866 610Q866 627 876 630" {...dash} />
      <path d="M881 591L905 597M876 630L899 635" stroke="#4a5a61" strokeDasharray="3 1" />
      <Ring cx={903} cy={615} rx={9} ry={19} fill="#97b0ba" {...edge} />
      <Ring cx={907} cy={615} rx={10} ry={20} fill="#8faab4" {...edge} />
      <Ring cx={908} cy={615} rx={8} ry={16} fill="#9db6c0" {...edge} />
      <Ring cx={909} cy={615} rx={6} ry={12} fill="#a9c6d1" {...edge} />

      {/* section curves */}
      <path d="M799 558L861 571L868 577L871 595M876 593L905 599L907 606M877 630L879 639M903 624L912 630" stroke="#1583e8" strokeWidth="2.5" />
      <path d="M799 558L795 534L858 547L863 572" stroke="#ff9b05" strokeWidth="3" />
      <path d="M863 572L868 607L833 649" stroke="#b08a52" />

      {/* datum axes */}
      <path d="M795 534L787 486M805 594L738 670M805 594L769 635L833 649" stroke="#a8721e" strokeWidth="1.2" />
      <path d="M805 594L908 616" stroke="#9a8058" />
      <path d="M805 594L846 603" stroke="#ff3008" strokeWidth="1.5" />
      <path d="M805 594L799 558" stroke="#55e010" strokeWidth="1.5" />
      <path d="M794 544L797 550L801 544M797 550V555" stroke="#40e010" strokeWidth="1.3" />
      <path d="M784 475L782 488Q786 490 790 487Z" fill="#a3650c" stroke="#6d430a" strokeWidth="0.7" />
      <path d="M733 676L737 665Q742 666 743 671Z" fill="#a3650c" stroke="#6d430a" strokeWidth="0.7" />
      <g fill="#a3650c">
        <text x="782" y="470" {...axisText}>Y</text>
        <text x="725" y="692" {...axisText}>Z</text>
        <text x="945" y="632" {...axisText}>X</text>
      </g>

      {/* dynamic triad */}
      <path d="M908 616L895 538" stroke="#22cc22" strokeWidth="2" />
      <path d="M892 523L890 539Q895 542 900 538Z" fill="#1c9a28" stroke="#0f5f18" strokeWidth="0.7" />
      <path d="M908 616L992 633" stroke="#ff1010" strokeWidth="2" />
      <path d="M1007 637L991 629Q988 633 990 638Z" fill="#e81818" stroke="#8a0c0c" strokeWidth="0.7" />
      <path d="M908 616L863 668" stroke="#1010f0" strokeWidth="2" />
      <path d="M852 680L856 667Q862 667 865 673Z" fill="#1414d8" stroke="#0a0a80" strokeWidth="0.7" />
      <path d="M930 620L918 615Q915 618 918 621Z" fill="#f0a02c" stroke="#8a520c" strokeWidth="0.7" />
    </svg>
  );
}

function Triad() {
  const t = { fontFamily: "Open Sans, sans-serif", fontSize: 19, textAnchor: "middle" };
  return (
    <svg width="150" height="136" viewBox="550 810 150 136" fill="none" className="absolute bottom-0 left-[35px]">
      <path d="M604 890L597 846" stroke="#22cc22" strokeWidth="1.5" />
      <path d="M595 835L592 847Q596 849 600 846Z" fill="#187a22" />
      <path d="M604 890L652 901" stroke="#ff1010" strokeWidth="1.5" />
      <path d="M664 904L651 897L650 905Z" fill="#d01414" />
      <path d="M604 890L577 921" stroke="#1010f0" strokeWidth="1.5" />
      <path d="M569 930L573 918L580 923Z" fill="#1212b0" />
      <text x="593" y="833" fill="#22cc22" {...t}>Y</text>
      <text x="672" y="911" fill="#ff1010" {...t}>X</text>
      <text x="566" y="941" fill="#1010f0" {...t}>Z</text>
    </svg>
  );
}

function Canvas() {
  return (
    <main className="relative min-w-0 flex-1 overflow-hidden bg-linear-to-b from-white to-[#a5a5a5]">
      <ViewToolbar />
      <div className="-mt-[2px] pl-[21px] font-['Noto_Sans',sans-serif] leading-5 text-black">
        <p>&lt;LEVÝ-KLIK&gt; PRO AKTIVACI DYNAMICKÉHO VSTUPU VÝBĚRU.</p>
        <p>&lt;F8&gt; nebo &lt;Shift-roll&gt; pro nalezení dalšího platného nastavení filtru.</p>
      </div>
      <Model />
      <Triad />
    </main>
  );
}

export default function App() {
  return (
    <div className="flex h-screen flex-col overflow-hidden bg-[#e8eaeb] font-['Open_Sans','Noto_Sans',sans-serif] text-sm text-[#24272b]">
      <Gradients />
      <TitleBar />
      <RibbonTabs />
      <Ribbon />
      <SelectToolbar />
      <div className="flex h-[26px] shrink-0">
        <div className="flex w-[521px] shrink-0 items-center border-b border-[#bcc0c6] pl-px">
          <h1>Rovinný řez</h1>
          <button aria-label="Maximalizovat" className="ml-auto">
            <svg width="12" height="9" viewBox="0 0 12 9" fill="none" stroke="#8f9398">
              <path d="M0.5 0.5H11.5V8.5H0.5ZM3.5 3.5H8.5V5.5H3.5Z" />
            </svg>
          </button>
          <button aria-label="Zavřít panel" className="ml-[10px]">
            <svg width="16" height="13" viewBox="0 0 16 13" fill="none">
              <path d="M2 1L14 12M14 1L2 12" stroke="#94989c" strokeWidth="4" />
              <path d="M3 2L13 11M13 2L3 11" stroke="#f2f3f4" strokeWidth="2" />
            </svg>
          </button>
          <svg width="8" height="24" viewBox="0 0 8 24" fill="none" className="ml-[9px]">
            <path d="M1 1Q5 5 3 9Q2 12 4 14Q5 19 1 23" stroke="#8f9398" />
          </svg>
        </div>
        <DocTabs />
      </div>
      <div className="flex min-h-0 flex-1">
        <div className="flex w-[515px] shrink-0 border-r-4 border-double border-[#b6bcc6]">
          <SideStrip />
          <CommandPanel />
        </div>
        <Canvas />
      </div>
    </div>
  );
}
